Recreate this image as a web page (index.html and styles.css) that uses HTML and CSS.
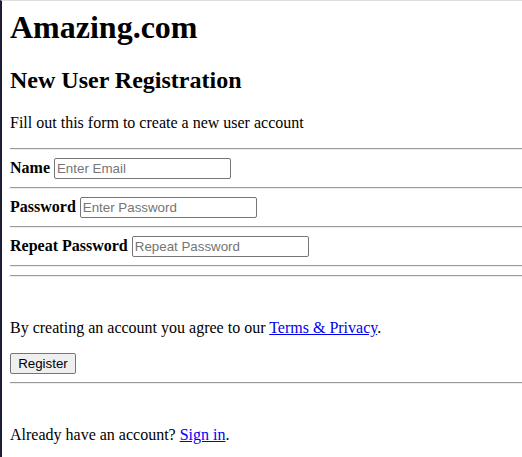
FILE: index.html
```html
<!DOCTYPE html>
<html lang="en">
<head>
<meta charset="utf-8">
<title>Amazing.com - Register</title>
<link rel="stylesheet" href="styles.css">
</head>
<body>
<div class="page">
  <h1 class="brand">Amazing.com</h1>
  <h2 class="title">New User Registration</h2>
  <p class="intro">Fill out this form to create a new user account</p>
  <hr class="rule">
  <div class="field"><label class="field-label" for="email">Name</label> <input class="field-input" id="email" type="text" placeholder="Enter Email"></div>
  <hr class="rule">
  <div class="field"><label class="field-label" for="psw">Password</label> <input class="field-input" id="psw" type="password" placeholder="Enter Password"></div>
  <hr class="rule">
  <div class="field"><label class="field-label" for="psw-repeat">Repeat Password</label> <input class="field-input" id="psw-repeat" type="password" placeholder="Repeat Password"></div>
  <hr class="rule">
  <hr class="rule">
  <p class="note">By creating an account you agree to our <a class="link" href="#">Terms &amp; Privacy</a>.</p>
  <div class="actions"><button class="btn" type="button">Register</button></div>
  <hr class="rule">
  <p class="note">Already have an account? <a class="link" href="#">Sign in</a>.</p>
</div>
</body>
</html>
```
FILE: styles.css
```css
html, body {
  height: 100%;
}

body {
  margin: 0;
  box-sizing: border-box;
  min-height: 100%;
  border-left: 2px solid #1d1d33;
  border-top: 1px solid #dedede;
  background: #ffffff;
  color: #000000;
  font-family: "Liberation Serif", "Times New Roman", serif;
  font-size: 16px;
}

.page {
  padding: 8px 0 0 8px;
}

.brand {
  margin: 0 0 21.44px;
  font-size: 32px;
  font-weight: bold;
}

.title {
  margin: 21.44px 0 19.92px;
  font-size: 24px;
  font-weight: bold;
}

.intro {
  margin: 16px 0;
}

.rule {
  margin: 8px 0;
  height: 0;
  border: 0;
  border-top: 1px solid #9a9a9a;
  border-bottom: 1px solid #eeeeee;
}

.field-label {
  font-weight: bold;
}

.field-input {
  box-sizing: border-box;
  width: 177px;
  height: 21px;
  padding: 1px 2px;
  border: 1px solid #767676;
  border-radius: 2px;
  font-family: "Liberation Sans", Arial, sans-serif;
  font-size: 13.333px;
  color: #000;
  background: #fff;
}

.field-input::placeholder {
  color: #757575;
}

.note {
  margin: 42px 0 16px;
}

.link {
  color: #0000ee;
  text-decoration: underline;
}

.actions {
  margin: 0;
}

.btn {
  box-sizing: border-box;
  width: 66px;
  height: 21px;
  padding: 1px 6px;
  border: 1px solid #767676;
  border-radius: 2px;
  background: #efefef;
  color: #000;
  font-family: "Liberation Sans", Arial, sans-serif;
  font-size: 13.333px;
}
```
